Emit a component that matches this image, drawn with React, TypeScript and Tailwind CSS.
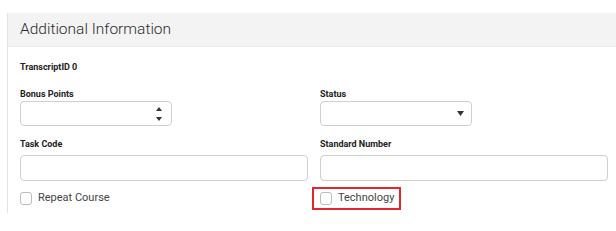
export default function App() {
  return (
    <div className="h-[231px] w-[616px] bg-white pt-[13px] font-['Roboto',sans-serif] text-[#333]">
      <div className="ml-[7px] h-[200px] border-l border-[#e3e3e3]">
        <div className="flex h-[34px] items-center border-b border-[#ebebeb] bg-[#f3f3f3] pl-[12px]">
          <h2 className="text-[15.5px] font-light text-[#2b2b2b]">Additional Information</h2>
        </div>
        <div className="pl-[12px] pr-[8px]">
          <div className="pt-[14px] text-[9px] font-bold text-[#222]">TranscriptID 0</div>

          <div className="mt-[13px] grid grid-cols-[288px_288px] gap-x-[12px]">
            <div>
              <label className="block text-[9px] font-bold text-[#222]">Bonus Points</label>
              <div className="flex h-[25px] w-[152px] items-center justify-end rounded-[4px] border border-[#cfcfcf] pr-[9px]">
                <div className="flex flex-col items-center gap-[6px]">
                  <svg width="6" height="4" viewBox="0 0 6 4"><path d="M3 0L6 4H0z" fill="#333" /></svg>
                  <svg width="6" height="4" viewBox="0 0 6 4"><path d="M0 0h6L3 4z" fill="#333" /></svg>
                </div>
              </div>
            </div>
            <div>
              <label className="block text-[9px] font-bold text-[#222]">Status</label>
              <div className="flex h-[25px] w-[152px] items-center justify-end rounded-[4px] border border-[#cfcfcf] pr-[7px]">
                <svg width="7" height="5" viewBox="0 0 7 5"><path d="M0 0h7L3.5 5z" fill="#333" /></svg>
              </div>
            </div>

            <div className="mt-[12px]">
              <label className="block text-[9px] font-bold text-[#222]">Task Code</label>
              <div className="mt-[3px] h-[26px] rounded-[4px] border border-[#cfcfcf]" />
            </div>
            <div className="mt-[12px]">
              <label className="block text-[9px] font-bold text-[#222]">Standard Number</label>
              <div className="mt-[3px] h-[26px] rounded-[4px] border border-[#cfcfcf]" />
            </div>

            <div className="mt-[6px] flex h-[23px] items-center gap-[6px]">
              <span className="h-[13px] w-[12px] rounded-[3px] border border-[#bdbdbd]" />
              <span className="text-[11px] text-[#444]">Repeat Course</span>
            </div>
            <div className="mt-[6px] flex">
              <div className="-ml-[8px] flex h-[23px] items-center gap-[6px] border-2 border-[#e3262e] pl-[6px] pr-[5px]">
                <span className="h-[13px] w-[12px] rounded-[3px] border border-[#bdbdbd]" />
                <span className="text-[11px] text-[#444]">Technology</span>
              </div>
            </div>
          </div>
        </div>
      </div>
    </div>
  )
}
